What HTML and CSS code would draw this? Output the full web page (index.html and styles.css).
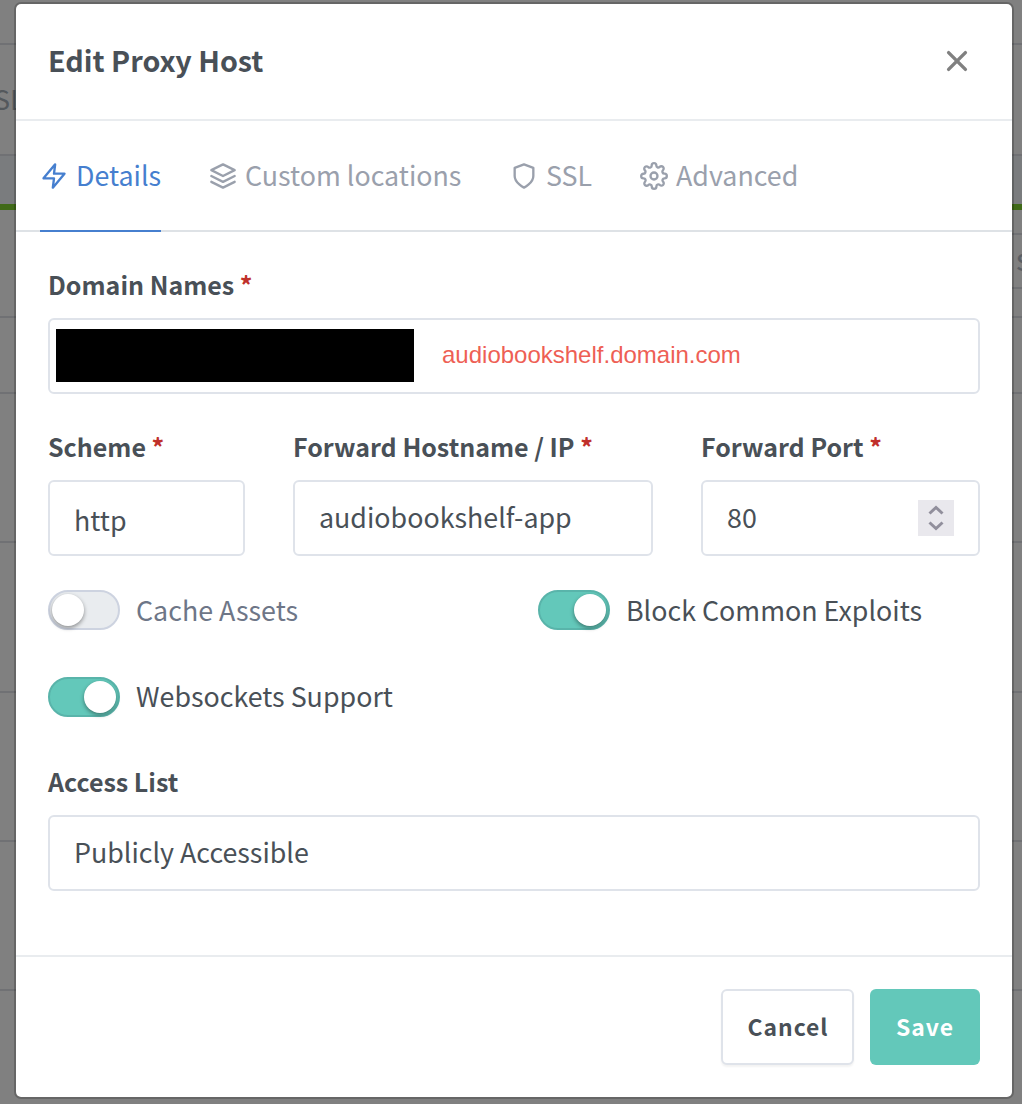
FILE: index.html
```
<!DOCTYPE html>
<html lang="en">
<head>
<meta charset="utf-8">
<title>Edit Proxy Host</title>
<link rel="stylesheet" href="styles.css">
</head>
<body>
<div class="page">
  <div class="row row-top"></div>
  <div class="row row-nav"><span class="nav-text">SL</span></div>
  <div class="row row-band"></div>
  <div class="row row-green"></div>
  <div class="columns">
    <div class="side side-left">
      <div class="row row-head"></div>
      <div class="row row-first"></div>
      <div class="row row-item"></div>
      <div class="row row-item row-tall"></div>
      <div class="row row-item"></div>
      <div class="row row-item"></div>
    </div>
    <div class="side side-right">
      <div class="row row-a"></div>
      <div class="row row-b"><span class="head-text">S</span></div>
      <div class="row row-c"></div>
      <div class="row row-first"></div>
      <div class="row row-item"></div>
      <div class="row row-item row-tall"></div>
      <div class="row row-item"></div>
      <div class="row row-item"></div>
    </div>
  </div>
</div>

<div class="modal">
  <header class="modal-header">
    <h1 class="title">Edit Proxy Host</h1>
    <button class="close" aria-label="Close"><svg width="22" height="22" viewBox="0 0 22 22"><path d="M2.6 2.6 19.4 19.4M19.4 2.6 2.6 19.4"/></svg></button>
  </header>
  <nav class="tabs">
    <a class="tab tab-details active"><svg class="icon" viewBox="0 0 24 24"><path d="M13 2 3 14h9l-1 8 10-12h-9l1-8z"/></svg><span>Details</span></a>
    <a class="tab tab-custom"><svg class="icon" viewBox="0 0 24 24"><path d="M12 2 2 7l10 5 10-5-10-5zM2 17l10 5 10-5M2 12l10 5 10-5"/></svg><span>Custom locations</span></a>
    <a class="tab tab-ssl"><svg class="icon" viewBox="0 0 24 24"><path d="M12 22s8-4 8-10V5l-8-3-8 3v7c0 6 8 10 8 10z"/></svg><span>SSL</span></a>
    <a class="tab tab-advanced"><svg class="icon" viewBox="0 0 24 24"><circle cx="12" cy="12" r="3"/><path d="M19.4 15a1.65 1.65 0 0 0 .33 1.82l.06.06a2 2 0 0 1 0 2.83 2 2 0 0 1-2.83 0l-.06-.06a1.65 1.65 0 0 0-1.82-.33 1.65 1.65 0 0 0-1 1.51V21a2 2 0 0 1-2 2 2 2 0 0 1-2-2v-.09A1.65 1.65 0 0 0 9 19.4a1.65 1.65 0 0 0-1.82.33l-.06.06a2 2 0 0 1-2.83 0 2 2 0 0 1 0-2.83l.06-.06a1.65 1.65 0 0 0 .33-1.82 1.65 1.65 0 0 0-1.51-1H3a2 2 0 0 1-2-2 2 2 0 0 1 2-2h.09A1.65 1.65 0 0 0 4.6 9a1.65 1.65 0 0 0-.33-1.82l-.06-.06a2 2 0 0 1 0-2.83 2 2 0 0 1 2.83 0l.06.06a1.65 1.65 0 0 0 1.82.33H9a1.65 1.65 0 0 0 1-1.51V3a2 2 0 0 1 2-2 2 2 0 0 1 2 2v.09a1.65 1.65 0 0 0 1 1.51 1.65 1.65 0 0 0 1.82-.33l.06-.06a2 2 0 0 1 2.83 0 2 2 0 0 1 0 2.83l-.06.06a1.65 1.65 0 0 0-.33 1.82V9a1.65 1.65 0 0 0 1.51 1H21a2 2 0 0 1 2 2 2 2 0 0 1-2 2h-.09a1.65 1.65 0 0 0-1.51 1z"/></svg><span>Advanced</span></a>
  </nav>
  <main class="form">
    <section class="field">
      <div class="label">Domain Names <span class="required">*</span></div>
      <div class="control domains"><span class="redacted"></span><span class="note">audiobookshelf.domain.com</span></div>
    </section>
    <div class="forward">
      <section class="field">
        <div class="label">Scheme <span class="required">*</span></div>
        <div class="control select"><span>http</span></div>
      </section>
      <section class="field">
        <div class="label">Forward Hostname / IP <span class="required">*</span></div>
        <div class="control"><span>audiobookshelf-app</span></div>
      </section>
      <section class="field">
        <div class="label">Forward Port <span class="required">*</span></div>
        <div class="control port"><span>80</span><svg class="spinner" width="36" height="36" viewBox="0 0 36 36"><path d="M11.5 13.5 18 7.5l6.5 6M11.5 22.5l6.5 6 6.5-6"/></svg></div>
      </section>
    </div>
    <div class="switches">
      <label class="switch"><span class="track"><span class="knob"></span></span><span>Cache Assets</span></label>
      <label class="switch on"><span class="track"><span class="knob"></span></span><span>Block Common Exploits</span></label>
      <label class="switch on"><span class="track"><span class="knob"></span></span><span class="raised">Websockets Support</span></label>
    </div>
    <section class="field">
      <div class="label">Access List</div>
      <div class="control access"><span>Publicly Accessible</span></div>
    </section>
  </main>
  <footer class="modal-footer">
    <button class="btn cancel">Cancel</button>
    <button class="btn save">Save</button>
  </footer>
</div>
</body>
</html>
```
FILE: styles.css
```
* { box-sizing: border-box; }

body {
  margin: 0;
  width: 1022px;
  height: 1104px;
  position: relative;
  overflow: hidden;
  background: #808080;
  color: #495057;
  font-family: "Noto Sans CJK SC", "Noto Sans", sans-serif;
  font-size: 26.82px;
  line-height: 36px;
}

/* Dimmed page behind the dialog */
.page { height: 1104px; display: flex; flex-direction: column; }
.row { flex: none; border-bottom: 2px solid #707174; }
.row-top { height: 45px; }
.row-nav { height: 111px; padding-top: 36px; color: #54585c; }
.nav-text { margin-left: -6px; }
.row-band { height: 48px; background: #7a7c7e; border: 0; }
.row-green { height: 6px; background: #406a18; border: 0; }
.columns { display: flex; justify-content: space-between; }
.side { width: 16px; overflow: hidden; }
.side-right { width: 10px; }
.row-head { height: 108px; }
.row-a { height: 25px; }
.row-b { height: 54px; padding: 7px 0 0 4px; color: #5a5e64; }
.row-c { height: 29px; }
.row-first { height: 76px; }
.row-item { height: 149px; }
.row-tall { height: 150px; }
.head-text { font-size: 23px; font-weight: 500; }

.modal {
  position: absolute;
  left: 14px;
  top: 2px;
  width: 1000px;
  height: 1097px;
  display: flex;
  flex-direction: column;
  background: #fff;
  background-clip: padding-box;
  border: 2px solid rgba(0, 0, 0, .2);
  border-radius: 7px;
}

.modal-header {
  height: 117px;
  padding: 0 44px 2px 32px;
  display: flex;
  align-items: center;
  justify-content: space-between;
  border-bottom: 2px solid #e9ecef;
}
.title { margin: 0; padding-bottom: 2px; font-size: 28.7px; font-weight: 700; }
button { font-family: inherit; }
.close { width: 22px; height: 22px; padding: 0; border: 0; background: none; }
.close svg { display: block; fill: none; stroke: #808080; stroke-width: 3.4; stroke-linecap: round; }

.tabs {
  height: 111px;
  padding-left: 24px;
  display: flex;
  gap: 48px;
  border-bottom: 2px solid #dee2e6;
}
.tab {
  height: 111px;
  display: flex;
  align-items: center;
  gap: 8px;
  color: #9aa0ac;
  border-bottom: 2px solid transparent;
  white-space: nowrap;
}
.tab span { padding-bottom: 2px; }
.tab-details { width: 121px; }
.tab-custom { width: 253px; }
.tab-ssl { width: 82px; }
.active { color: #467fcf; border-color: #467fcf; }
.icon {
  flex: none;
  width: 28px;
  height: 28px;
  fill: none;
  stroke: currentColor;
  stroke-width: 2;
  stroke-linecap: round;
  stroke-linejoin: round;
}

.form { padding: 34px 32px 64px; }
.label { height: 36px; margin-bottom: 16px; font-size: 25px; font-weight: 700; white-space: nowrap; }
.required { color: #c0302b; }
.control {
  height: 76px;
  padding: 0 24px;
  display: flex;
  align-items: center;
  border: 2px solid #dfe3ea;
  border-radius: 6px;
  background: #fff;
}
.control span { padding-bottom: 2px; }
.domains { padding: 0 6px 2px; gap: 28px; }
.redacted { width: 358px; height: 53px; background: #000; }
.control .note { padding: 0; font-family: "Liberation Sans", Arial, sans-serif; font-size: 24px; color: #ee5f55; }
.forward { margin-top: 34px; display: grid; grid-template-columns: 197px 360px 279px; gap: 48px; }
.select { padding-top: 5px; }
.port { justify-content: space-between; }
.spinner { background: #e9e8ed; fill: none; stroke: #918f9c; stroke-width: 3; }

.switches {
  margin: 34px 0 46px;
  display: grid;
  grid-template-columns: 490px 1fr;
  grid-auto-rows: 40px;
  row-gap: 47px;
}
.switch { display: flex; align-items: center; gap: 16px; color: #6e7687; }
.raised { padding-bottom: 2px; }
.track {
  width: 72px;
  height: 40px;
  padding: 2px;
  display: flex;
  border: 2px solid #cdd3e0;
  border-radius: 20px;
  background: #e9ecef;
}
.knob { width: 32px; height: 32px; border-radius: 50%; background: #fff; box-shadow: 0 2px 4px rgba(0, 0, 0, .4); }
.on { color: #495057; }
.on .track { justify-content: flex-end; background: #63c8ba; border-color: #59b4aa; }

.modal-footer {
  height: 142px;
  padding: 32px;
  display: flex;
  justify-content: flex-end;
  gap: 16px;
  border-top: 2px solid #e9ecef;
}
.btn { height: 76px; padding: 0 0 2px; border-radius: 6px; font-size: 22.9px; font-weight: 700; letter-spacing: 1px; }
.cancel { width: 133px; padding-left: 1px; border: 2px solid #dfe3ea; background: #fff; color: #495057; box-shadow: 0 2px 2px rgba(0, 0, 0, .05); }
.save { width: 110px; border: 0; background: #63c8ba; color: #fff; }
```
